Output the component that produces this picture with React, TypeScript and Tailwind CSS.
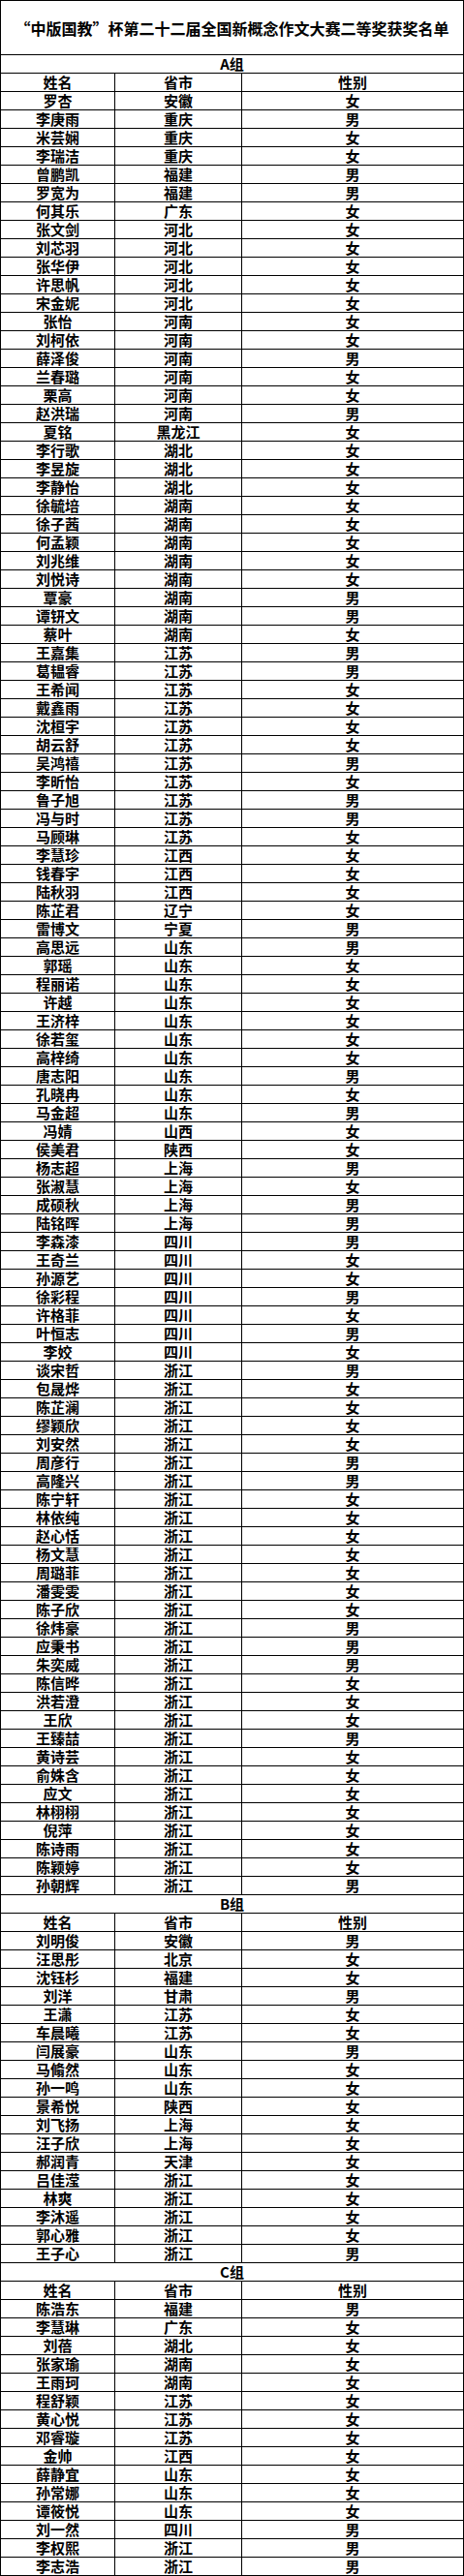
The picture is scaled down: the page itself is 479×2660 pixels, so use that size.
type Row = [string, string, string];

const groupA: Row[] = [
  ['罗杏', '安徽', '女'],
  ['李庚雨', '重庆', '男'],
  ['米芸娴', '重庆', '女'],
  ['李瑞洁', '重庆', '女'],
  ['曾鹏凯', '福建', '男'],
  ['罗宽为', '福建', '男'],
  ['何其乐', '广东', '女'],
  ['张文剑', '河北', '女'],
  ['刘芯羽', '河北', '女'],
  ['张华伊', '河北', '女'],
  ['许思帆', '河北', '女'],
  ['宋金妮', '河北', '女'],
  ['张怡', '河南', '女'],
  ['刘柯依', '河南', '女'],
  ['薛泽俊', '河南', '男'],
  ['兰春璐', '河南', '女'],
  ['栗高', '河南', '女'],
  ['赵洪瑞', '河南', '男'],
  ['夏铭', '黑龙江', '女'],
  ['李行歌', '湖北', '女'],
  ['李昱旋', '湖北', '女'],
  ['李静怡', '湖北', '女'],
  ['徐毓培', '湖南', '女'],
  ['徐子茜', '湖南', '女'],
  ['何孟颖', '湖南', '女'],
  ['刘兆维', '湖南', '女'],
  ['刘悦诗', '湖南', '女'],
  ['覃豪', '湖南', '男'],
  ['谭钘文', '湖南', '男'],
  ['蔡叶', '湖南', '女'],
  ['王嘉集', '江苏', '男'],
  ['葛韫睿', '江苏', '男'],
  ['王希闻', '江苏', '女'],
  ['戴鑫雨', '江苏', '女'],
  ['沈桓宇', '江苏', '女'],
  ['胡云舒', '江苏', '女'],
  ['吴鸿禧', '江苏', '男'],
  ['李昕怡', '江苏', '女'],
  ['鲁子旭', '江苏', '男'],
  ['冯与时', '江苏', '男'],
  ['马顾琳', '江苏', '女'],
  ['李慧珍', '江西', '女'],
  ['钱春宇', '江西', '女'],
  ['陆秋羽', '江西', '女'],
  ['陈芷君', '辽宁', '女'],
  ['雷博文', '宁夏', '男'],
  ['高思远', '山东', '男'],
  ['郭瑶', '山东', '女'],
  ['程丽诺', '山东', '女'],
  ['许越', '山东', '女'],
  ['王济梓', '山东', '女'],
  ['徐若玺', '山东', '女'],
  ['高梓绮', '山东', '女'],
  ['唐志阳', '山东', '男'],
  ['孔晓冉', '山东', '女'],
  ['马金超', '山东', '男'],
  ['冯婧', '山西', '女'],
  ['侯美君', '陕西', '女'],
  ['杨志超', '上海', '男'],
  ['张淑慧', '上海', '女'],
  ['成硕秋', '上海', '男'],
  ['陆铭晖', '上海', '男'],
  ['李森漆', '四川', '男'],
  ['王奇兰', '四川', '女'],
  ['孙源艺', '四川', '女'],
  ['徐彩程', '四川', '男'],
  ['许格菲', '四川', '女'],
  ['叶恒志', '四川', '男'],
  ['李姣', '四川', '女'],
  ['谈宋哲', '浙江', '男'],
  ['包晟烨', '浙江', '女'],
  ['陈芷澜', '浙江', '女'],
  ['缪颖欣', '浙江', '女'],
  ['刘安然', '浙江', '女'],
  ['周彦行', '浙江', '男'],
  ['高隆兴', '浙江', '男'],
  ['陈宁轩', '浙江', '女'],
  ['林依纯', '浙江', '女'],
  ['赵心恬', '浙江', '女'],
  ['杨文慧', '浙江', '女'],
  ['周璐菲', '浙江', '女'],
  ['潘雯雯', '浙江', '女'],
  ['陈子欣', '浙江', '女'],
  ['徐炜豪', '浙江', '男'],
  ['应秉书', '浙江', '男'],
  ['朱奕威', '浙江', '男'],
  ['陈信晔', '浙江', '女'],
  ['洪若澄', '浙江', '女'],
  ['王欣', '浙江', '女'],
  ['王臻喆', '浙江', '男'],
  ['黄诗芸', '浙江', '女'],
  ['俞姝含', '浙江', '女'],
  ['应文', '浙江', '女'],
  ['林栩栩', '浙江', '女'],
  ['倪萍', '浙江', '女'],
  ['陈诗雨', '浙江', '女'],
  ['陈颖婷', '浙江', '女'],
  ['孙朝辉', '浙江', '男'],
];

const groupB: Row[] = [
  ['刘明俊', '安徽', '男'],
  ['汪思彤', '北京', '女'],
  ['沈钰杉', '福建', '女'],
  ['刘洋', '甘肃', '男'],
  ['王潇', '江苏', '女'],
  ['车晨曦', '江苏', '女'],
  ['闫展豪', '山东', '男'],
  ['马翛然', '山东', '女'],
  ['孙一鸣', '山东', '女'],
  ['景希悦', '陕西', '女'],
  ['刘飞扬', '上海', '女'],
  ['汪子欣', '上海', '女'],
  ['郝润青', '天津', '女'],
  ['吕佳滢', '浙江', '女'],
  ['林爽', '浙江', '女'],
  ['李沐遥', '浙江', '女'],
  ['郭心雅', '浙江', '女'],
  ['王子心', '浙江', '男'],
];

const groupC: Row[] = [
  ['陈浩东', '福建', '男'],
  ['李慧琳', '广东', '女'],
  ['刘蓓', '湖北', '女'],
  ['张家瑜', '湖南', '女'],
  ['王雨珂', '湖南', '女'],
  ['程舒颖', '江苏', '女'],
  ['黄心悦', '江苏', '女'],
  ['邓睿璇', '江苏', '女'],
  ['金帅', '江西', '女'],
  ['薛静宜', '山东', '女'],
  ['孙常娜', '山东', '女'],
  ['谭筱悦', '山东', '女'],
  ['刘一然', '四川', '男'],
  ['李权熙', '浙江', '男'],
  ['李志浩', '浙江', '男'],
];

const groups: { title: string; rows: Row[] }[] = [
  { title: 'A组', rows: groupA },
  { title: 'B组', rows: groupB },
  { title: 'C组', rows: groupC },
];

const TableRow = ({ cells }: { cells: Row }) => (
  <div className="grid h-[19px] grid-cols-[118px_131px_1fr] border-b border-black text-[15px] leading-[18px]">
    <div className="flex items-center justify-center border-r border-black">{cells[0]}</div>
    <div className="flex items-center justify-center border-r border-black">{cells[1]}</div>
    <div className="flex items-center justify-center">{cells[2]}</div>
  </div>
);

export default function App() {
  return (
    <div
      className="w-[479px] bg-white font-bold text-black"
      style={{ fontFamily: '"Noto Sans CJK SC", "Noto Sans", sans-serif' }}
    >
      <div className="border-x border-t border-black">
        {/* title */}
        <div className="flex h-[56px] items-center justify-center border-b border-black text-[16px] leading-[20px]">
          “中版国教”杯第二十二届全国新概念作文大赛二等奖获奖名单
        </div>

        {groups.map((group) => (
          <div key={group.title}>
            <div className="flex h-[19px] items-center justify-center border-b border-black text-[15px] leading-[18px]">
              {group.title}
            </div>
            <TableRow cells={['姓名', '省市', '性别']} />
            {group.rows.map((row, index) => (
              <TableRow key={index} cells={row} />
            ))}
          </div>
        ))}
      </div>
    </div>
  );
}
